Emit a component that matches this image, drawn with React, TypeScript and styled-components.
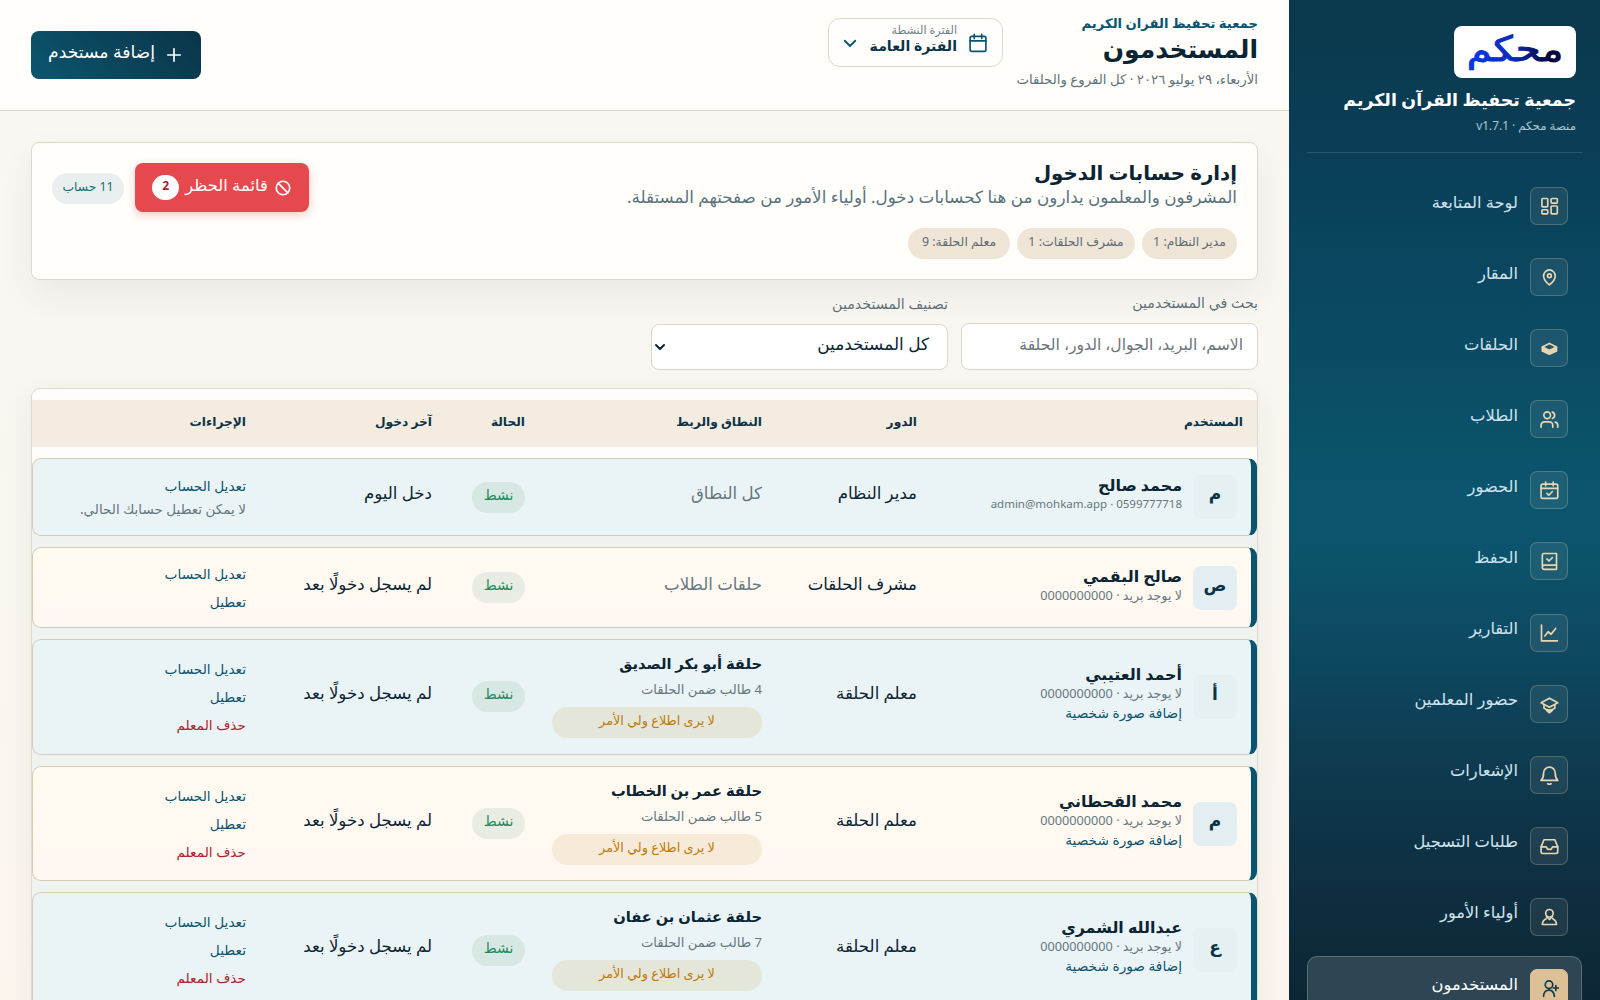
import React from "react";
import styled, { createGlobalStyle } from "styled-components";

const GlobalStyle = createGlobalStyle`
  *, *::before, *::after { box-sizing: border-box; }
  html, body { margin: 0; padding: 0; overflow: hidden; }
  body {
    font-family: "Noto Sans", "DejaVu Sans", sans-serif;
    color: #0b2433;
    background: #fbf8f2;
  }
  button, input { font-family: inherit; }
`;

const Page = styled.div`
  direction: rtl;
  display: flex;
  width: 1600px;
  height: 1000px;
  overflow: hidden;
  white-space: nowrap;
`;

/* ---------- sidebar ---------- */

const Sidebar = styled.aside`
  flex: 0 0 311px;
  height: 1000px;
  overflow: hidden;
  padding: 26px 18px 0;
  background: linear-gradient(180deg, #0a384c 0%, #0a4059 18%, #0b566f 52%, #0d4a62 64%, #0e3447 82%, #0d2635 100%);
`;

const Brand = styled.div`
  display: flex;
  flex-direction: column;
  align-items: flex-start;
  height: 127px;
  padding-right: 6px;
  border-bottom: 1px solid rgba(255, 255, 255, 0.13);
`;

const LogoCard = styled.div`
  display: flex;
  align-items: center;
  justify-content: center;
  width: 122px;
  height: 52px;
  border-radius: 8px;
  background: #fff;
`;

const BrandTitle = styled.div`
  margin-top: 7px;
  font-size: 17.4px;
  font-weight: 700;
  line-height: 28px;
  color: #fff;
`;

const BrandVersion = styled.div`
  margin-top: 2px;
  font-size: 11.8px;
  line-height: 20px;
  color: #a9c6d2;
`;

const Nav = styled.nav`
  display: flex;
  flex-direction: column;
  gap: 7.1px;
  padding-top: 21px;
`;

const NavItem = styled.a<{ $active?: boolean }>`
  display: flex;
  flex: none;
  align-items: center;
  gap: 12px;
  height: 64px;
  padding: 0 13px;
  border: 1px solid ${(p) => (p.$active ? "rgba(160,190,180,0.35)" : "transparent")};
  border-radius: 10px;
  background: ${(p) => (p.$active ? "#2e4653" : "transparent")};
  color: ${(p) => (p.$active ? "#ffffff" : "#cfe3ee")};
`;

const NavIcon = styled.span<{ $active?: boolean }>`
  display: grid;
  place-items: center;
  width: 38px;
  height: 38px;
  border: 1px solid ${(p) => (p.$active ? "#dcc096" : "rgba(200,190,150,0.3)")};
  border-radius: 7px;
  background: ${(p) => (p.$active ? "#dcc096" : "rgba(255,255,255,0.07)")};
  color: ${(p) => (p.$active ? "#0b3a4d" : "#e8d6b0")};
`;

const NavLabel = styled.span`
  padding-bottom: 9px;
  font-size: 16.3px;
  line-height: 24px;
`;

/* ---------- header ---------- */

const Main = styled.main`
  flex: 1;
  min-width: 0;
  background: linear-gradient(180deg, #fbf8f3 0%, #f9f6f0 45%, #fbf5ee 100%);
`;

const Header = styled.header`
  display: flex;
  justify-content: space-between;
  height: 111px;
  padding: 0 31px;
  border-bottom: 1px solid #d8d6c5;
  background: #fffefb;
`;

const HeaderLead = styled.div`
  display: flex;
  gap: 13px;
`;

const Heading = styled.div`
  display: flex;
  flex-direction: column;
  width: 242px;
  padding-top: 13px;
`;

const OrgName = styled.div`
  font-size: 13.2px;
  font-weight: 700;
  line-height: 20px;
  color: #0b5470;
`;

const PageTitle = styled.h1`
  margin: 0;
  font-size: 25px;
  font-weight: 700;
  line-height: 30px;
`;

const PageMeta = styled.div`
  margin-top: 6px;
  font-size: 13.3px;
  line-height: 20px;
  color: #62737a;
`;

const Period = styled.button`
  display: flex;
  align-items: center;
  gap: 11px;
  width: 175px;
  height: 49px;
  margin-top: 18px;
  padding: 0 14px;
  border: 1px solid #dcd9c9;
  border-radius: 12px;
  background: #fffefc;
  color: #0b5470;
`;

const PeriodText = styled.span`
  display: flex;
  flex: 1;
  flex-direction: column;
  align-items: flex-start;
  padding-bottom: 7px;
`;

const PeriodLabel = styled.span`
  font-size: 11.2px;
  line-height: 14px;
  color: #71818a;
`;

const PeriodValue = styled.span`
  font-size: 14.1px;
  font-weight: 700;
  line-height: 18px;
  color: #0b3347;
`;

const AddButton = styled.button`
  display: flex;
  align-items: center;
  justify-content: center;
  gap: 9px;
  width: 170px;
  height: 48px;
  margin-top: 31px;
  border: 0;
  border-radius: 8px;
  background: linear-gradient(225deg, #0a3448 0%, #0b566f 100%);
  color: #fff;
  font-size: 17.2px;
`;

const Raised = styled.span`
  padding-bottom: 6px;
  line-height: 20px;
`;

/* ---------- content ---------- */

const Content = styled.div`
  padding: 31px 31px 0;
`;

const Summary = styled.section`
  display: flex;
  justify-content: space-between;
  height: 138px;
  padding: 20px;
  border: 1px solid #dcd9c9;
  border-radius: 8px;
  background: #fffefb;
  box-shadow: 0 14px 34px rgba(11, 52, 72, 0.07);
`;

const SummaryTitle = styled.h2`
  margin: -3px 0 0;
  font-size: 19.8px;
  font-weight: 700;
  line-height: 26px;
`;

const SummaryText = styled.p`
  margin: 0;
  font-size: 16.8px;
  line-height: 22px;
  color: #5a737c;
`;

const Chips = styled.div`
  display: flex;
  gap: 7px;
  margin-top: 20px;
`;

const Chip = styled.span<{ $w: number }>`
  width: ${(p) => p.$w}px;
  height: 31px;
  border-radius: 16px;
  background: #efe5d7;
  color: #5d6c72;
  font-size: 12.4px;
  line-height: 27px;
  text-align: center;
`;

const SummaryActions = styled.div`
  display: flex;
  gap: 11px;
`;

const BlockButton = styled.button`
  display: flex;
  align-items: center;
  justify-content: center;
  gap: 6px;
  width: 174px;
  height: 49px;
  border: 0;
  border-radius: 8px;
  background: #e5484d;
  color: #fff;
  font-size: 16.4px;
  box-shadow: 0 3px 9px rgba(229, 72, 77, 0.3);
`;

const BlockCount = styled.span`
  width: 27px;
  height: 25px;
  border-radius: 13px;
  background: #fff;
  color: #a51d2a;
  font-size: 12px;
  font-weight: 700;
  line-height: 22px;
`;

const AccountCount = styled.span`
  width: 72px;
  height: 31px;
  margin-top: 10px;
  border-radius: 16px;
  background: #e9eeee;
  color: #187078;
  font-size: 12.3px;
  line-height: 27px;
  text-align: center;
`;

const Filters = styled.div`
  display: flex;
  gap: 13px;
  height: 108px;
  padding-top: 12px;
`;

const Field = styled.label<{ $drop?: number }>`
  display: flex;
  flex-direction: column;
  width: 297px;
  padding-top: ${(p) => p.$drop ?? 0}px;
`;

const FieldLabel = styled.span`
  height: 31px;
  font-size: 14.2px;
  line-height: 22px;
  color: #5d7078;
`;

const Control = styled.span<{ $h: number; $muted?: boolean }>`
  display: flex;
  align-items: center;
  justify-content: space-between;
  height: ${(p) => p.$h}px;
  padding: 0 ${(p) => (p.$muted ? 14 : 18)}px 0 2px;
  border: 1px solid #dcd9c9;
  border-radius: 8px;
  background: #fff;
  color: ${(p) => (p.$muted ? "#6b7478" : "#0b2433")};
  font-size: ${(p) => (p.$muted ? 15.6 : 16.9)}px;
`;

/* ---------- table ---------- */

const columns = "326px 155px 237px 93px 186px 228px";

const Table = styled.section`
  width: 1227px;
  height: 640px;
  padding-top: 11px;
  border: 1px solid #dcd9cf;
  border-radius: 9px;
  background: linear-gradient(180deg, #fffdfa 0, #fffdfa 72px, #eff3f0 144px);
  box-shadow: 0 8px 28px rgba(11, 52, 72, 0.06);
`;

const TableHead = styled.div`
  display: grid;
  grid-template-columns: ${columns};
  height: 47px;
  margin-bottom: 11px;
  background: #f5ece1;
`;

const HeadCell = styled.span`
  padding: 0 14px 0 0;
  font-size: 12.2px;
  font-weight: 700;
  line-height: 43px;
  color: #0b3347;
`;

const Row = styled.div<{ $h: number; $tint: boolean }>`
  display: grid;
  grid-template-columns: 320px 155px 237px 93px 186px 1fr;
  height: ${(p) => p.$h}px;
  margin-bottom: 11px;
  border: 1px solid #d8cbb4;
  border-right: 6px solid #0b5470;
  border-radius: 9px;
  background: ${(p) => (p.$tint ? "#eaf3f5" : "linear-gradient(180deg, #fffbf0, #fff7f2)")};
`;

const Cell = styled.div<{ $lift?: number }>`
  display: flex;
  flex-direction: column;
  align-items: flex-start;
  justify-content: center;
  min-width: 0;
  padding: 0 14px ${(p) => p.$lift ?? 0}px 0;
`;

const UserCell = styled.div`
  display: flex;
  align-items: center;
  gap: 11px;
  padding-right: 14px;
`;

const Avatar = styled.span<{ $tint: boolean }>`
  flex: none;
  width: 44px;
  height: 44px;
  border-radius: 8px;
  background: ${(p) => (p.$tint ? "#e5f0f2" : "#e2eef2")};
  font-size: 17px;
  font-weight: 700;
  line-height: 38px;
  text-align: center;
  color: #0b3347;
`;

const UserText = styled.div`
  display: flex;
  flex-direction: column;
  align-items: flex-start;
  padding-bottom: 6px;
`;

const UserName = styled.strong`
  font-size: 15.9px;
  line-height: 20px;
`;

const UserContact = styled.span`
  font-size: ${(p) => (p.dir === "ltr" ? 11.5 : 12.7)}px;
  line-height: 18px;
  color: #667880;
`;

const Link = styled.a<{ $danger?: boolean; $lh?: number }>`
  font-size: 13.7px;
  line-height: ${(p) => p.$lh ?? 28}px;
  color: ${(p) => (p.$danger ? "#b3202f" : "#0b5470")};
`;

const Plain = styled.span<{ $muted?: boolean }>`
  font-size: 16.6px;
  line-height: 24px;
  color: ${(p) => (p.$muted ? "#66777e" : "#0b2433")};
`;

const ScopeName = styled.strong`
  font-size: 14.7px;
  line-height: 24px;
`;

const ScopeCount = styled.span`
  font-size: 13.1px;
  line-height: 29px;
  color: #667880;
`;

const Notice = styled.span<{ $tint: boolean }>`
  width: 210px;
  height: 31px;
  margin-top: 3px;
  border-radius: 16px;
  background: ${(p) => (p.$tint ? "#e5e6da" : "#f8ead8")};
  color: #bd7a0c;
  font-size: 12.8px;
  line-height: 26px;
  text-align: center;
`;

const Status = styled.span<{ $tint: boolean }>`
  width: 53px;
  height: 31px;
  border-radius: 16px;
  background: ${(p) => (p.$tint ? "#d7e8e4" : "#e8ece2")};
  color: #1f8a5b;
  font-size: 14px;
  line-height: 26px;
  text-align: center;
`;

const Note = styled.span`
  font-size: 13.5px;
  line-height: 22px;
  color: #667880;
`;

/* ---------- icons ---------- */

const Icon = ({ size = 20, sw = 2, children }: { size?: number; sw?: number; children: React.ReactNode }) => (
  <svg width={size} height={size} viewBox="0 0 24 24" fill="none" stroke="currentColor" strokeWidth={sw} strokeLinecap="round" strokeLinejoin="round" style={{ flex: "none" }}>
    {children}
  </svg>
);

const icons = {
  dashboard: <><rect x="3.5" y="3" width="7" height="10" rx="1" /><rect x="14.5" y="3" width="7.500" height="5.500" rx="1" /><rect x="14.5" y="12" width="7.500" height="9.500" rx="1" /><rect x="3.5" y="16.5" width="7" height="5" rx="1" /></>,
  pin: <><path d="M12.500 21.500c4.500-3.800 7-7 7-10.500a7 7.500 0 0 0-14 0c0 3.500 2.500 6.700 7 10.500z" /><circle cx="12.500" cy="10.500" r="2.300" /></>,
  layers: <><path d="M4 11l8.500 4.500L21 11v4.500l-8.500 4L4 15.500z" fill="currentColor" /><path d="M12.500 6.500L21 10.800l-8.500 4.200L4 10.800z" /></>,
  users: <><circle cx="9.800" cy="7.500" r="4" /><path d="M2.500 22v-2.500a4 4 0 0 1 4-4h6a4 4 0 0 1 4 4V22M16 3.700a4 4 0 0 1 0 7.600M22.500 22v-2.500a4 4 0 0 0-3-3.800" /></>,
  calendarCheck: <><rect x="2.500" y="5" width="20" height="17" rx="2" /><path d="M8 2.500v4.500M17 2.500v4.500M2.500 10h20M9.500 16l2.300 2.300 4.200-4.500" /></>,
  book: <><path d="M4 19.500V5a2 2 0 0 1 2-2h15v19H6.500a2.500 2.500 0 0 1 0-5H21M9.500 9.500l2.500 2.500 4-4" /></>,
  chart: <><path d="M3 2.500V21.500h19M7 15.500l4-5 3.500 3L20 6.500" /></>,
  cap: <><path d="M12.500 5l10 5.500-10 5.500-10-5.500z" /><path d="M6 13v4c3 3 10 3 13 0v-4M9 19.500l3.500 3 3.500-3" /></>,
  bell: <><path d="M2.500 18.500h20c-2-2-3-4-3-9a7 7 0 0 0-14 0c0 5-1 7-3 9zM10.500 22.500c1.200.800 2.800.800 4 0" /></>,
  inbox: <><path d="M22.500 13h-6l-2 3h-4l-2-3h-6" /><path d="M6 4.500h13l3.500 8.500v6a2 2 0 0 1-2 2h-16a2 2 0 0 1-2-2v-6z" /></>,
  guardian: <><circle cx="12.500" cy="7.500" r="4.500" /><path d="M9 11.500l3.500 3.500 3.500-3.500M8.500 14c-3 1.500-4.500 4-4.500 7h17c0-3-1.500-5.500-4.500-7" /></>,
  userPlus: <><circle cx="12" cy="8" r="4.500" /><path d="M5.500 22c0-5 3-7.500 6.500-7.500s6 2.500 6.500 7.500M17 12h6.500M20.200 9v6" /></>,
};

const nav: [string, React.ReactNode][] = [
  ["لوحة المتابعة", icons.dashboard],
  ["المقار", icons.pin],
  ["الحلقات", icons.layers],
  ["الطلاب", icons.users],
  ["الحضور", icons.calendarCheck],
  ["الحفظ", icons.book],
  ["التقارير", icons.chart],
  ["حضور المعلمين", icons.cap],
  ["الإشعارات", icons.bell],
  ["طلبات التسجيل", icons.inbox],
  ["أولياء الأمور", icons.guardian],
  ["المستخدمون", icons.userPlus],
];

const LogoMark = styled.svg`
  direction: rtl;
  font-family: "DejaVu Sans", sans-serif;
  font-size: 35px;
`;

const Logo = () => (
  <LogoMark width="108" height="46" viewBox="0 0 108 46">
    <defs>
      <linearGradient id="logoInk" x1="0" y1="0" x2="1" y2="0">
        <stop offset="0.08" stopColor="#0538e0" />
        <stop offset="0.45" stopColor="#0a2bc0" />
        <stop offset="0.85" stopColor="#06083c" />
      </linearGradient>
    </defs>
    <text transform="translate(54 32) scale(1.15 1)" textAnchor="middle" fill="url(#logoInk)" stroke="url(#logoInk)" strokeWidth="1">محكم</text>
  </LogoMark>
);

type User = {
  letter: string;
  name: string;
  contact: string;
  role: string;
  scope: string;
  students?: string;
  last: string;
  h: number;
  self?: boolean;
};

const never = "لم يسجل دخولًا بعد";
const noMail = "لا يوجد بريد · 0000000000";

const users: User[] = [
  { letter: "م", name: "محمد صالح", contact: "admin@mohkam.app · 0599777718", role: "مدير النظام", scope: "كل النطاق", last: "دخل اليوم", h: 78, self: true },
  { letter: "ص", name: "صالح البقمي", contact: noMail, role: "مشرف الحلقات", scope: "حلقات الطلاب", last: never, h: 81 },
  { letter: "أ", name: "أحمد العتيبي", contact: noMail, role: "معلم الحلقة", scope: "حلقة أبو بكر الصديق", students: "4 طالب ضمن الحلقات", last: never, h: 115.7 },
  { letter: "م", name: "محمد القحطاني", contact: noMail, role: "معلم الحلقة", scope: "حلقة عمر بن الخطاب", students: "5 طالب ضمن الحلقات", last: never, h: 115.7 },
  { letter: "ع", name: "عبدالله الشمري", contact: noMail, role: "معلم الحلقة", scope: "حلقة عثمان بن عفان", students: "7 طالب ضمن الحلقات", last: never, h: 115.7 },
];

const heads = ["المستخدم", "الدور", "النطاق والربط", "الحالة", "آخر دخول", "الإجراءات"];

function UserRow({ user, tint }: { user: User; tint: boolean }) {
  return (
    <Row $h={user.h} $tint={tint}>
      <UserCell>
        <Avatar $tint={tint}>{user.letter}</Avatar>
        <UserText>
          <UserName>{user.name}</UserName>
          <UserContact dir={user.self ? "ltr" : "rtl"}>{user.contact}</UserContact>
          {user.students && <Link $lh={22}>إضافة صورة شخصية</Link>}
        </UserText>
      </UserCell>
      <Cell $lift={8}><Plain>{user.role}</Plain></Cell>
      {user.students ? (
        <Cell $lift={5}>
          <ScopeName>{user.scope}</ScopeName>
          <ScopeCount>{user.students}</ScopeCount>
          <Notice $tint={tint}>لا يرى اطلاع ولي الأمر</Notice>
        </Cell>
      ) : (
        <Cell $lift={8}><Plain $muted>{user.scope}</Plain></Cell>
      )}
      <Cell><Status $tint={tint}>نشط</Status></Cell>
      <Cell $lift={8}><Plain>{user.last}</Plain></Cell>
      <Cell>
        <Link $lh={user.self ? 24 : 28}>تعديل الحساب</Link>
        {user.self ? <Note>لا يمكن تعطيل حسابك الحالي.</Note> : <Link>تعطيل</Link>}
        {user.students && <Link $danger>حذف المعلم</Link>}
      </Cell>
    </Row>
  );
}

export default function App() {
  return (
    <Page dir="rtl" lang="ar">
      <GlobalStyle />
      <Sidebar>
        <Brand>
          <LogoCard><Logo /></LogoCard>
          <BrandTitle>جمعية تحفيظ القرآن الكريم</BrandTitle>
          <BrandVersion>منصة محكم · v1.7.1</BrandVersion>
        </Brand>
        <Nav>
          {nav.map(([label, icon], i) => (
            <NavItem key={label} $active={i === nav.length - 1}>
              <NavIcon $active={i === nav.length - 1}><Icon>{icon}</Icon></NavIcon>
              <NavLabel>{label}</NavLabel>
            </NavItem>
          ))}
        </Nav>
      </Sidebar>
      <Main>
        <Header>
          <HeaderLead>
            <Heading>
              <OrgName>جمعية تحفيظ القران الكريم</OrgName>
              <PageTitle>المستخدمون</PageTitle>
              <PageMeta>الأربعاء، ٢٩ يوليو ٢٠٢٦ · كل الفروع والحلقات</PageMeta>
            </Heading>
            <Period>
              <Icon><rect x="2.5" y="4" width="19" height="18" rx="2" /><path d="M7.500 1.500v5M16.500 1.500v5M2.500 9.500h19" /></Icon>
              <PeriodText>
                <PeriodLabel>الفترة النشطة</PeriodLabel>
                <PeriodValue>الفترة العامة</PeriodValue>
              </PeriodText>
              <Icon size={18} sw={2.4}><path d="M5 9l7 7 7-7" /></Icon>
            </Period>
          </HeaderLead>
          <AddButton>
            <Icon size={20}><path d="M12 4.500v15M4.500 12h15" /></Icon>
            <Raised>إضافة مستخدم</Raised>
          </AddButton>
        </Header>
        <Content>
          <Summary>
            <div>
              <SummaryTitle>إدارة حسابات الدخول</SummaryTitle>
              <SummaryText>المشرفون والمعلمون يدارون من هنا كحسابات دخول. أولياء الأمور من صفحتهم المستقلة.</SummaryText>
              <Chips>
                <Chip $w={95}>مدير النظام: 1</Chip>
                <Chip $w={118}>مشرف الحلقات: 1</Chip>
                <Chip $w={102}>معلم الحلقة: 9</Chip>
              </Chips>
            </div>
            <SummaryActions>
              <BlockButton>
                <Icon size={18} sw={2.2}><circle cx="12" cy="12" r="9" /><path d="M5.600 5.600l12.800 12.800" /></Icon>
                <Raised>قائمة الحظر</Raised>
                <BlockCount>2</BlockCount>
              </BlockButton>
              <AccountCount>11 حساب</AccountCount>
            </SummaryActions>
          </Summary>
          <Filters>
            <Field>
              <FieldLabel>بحث في المستخدمين</FieldLabel>
              <Control $h={47} $muted><Raised>الاسم، البريد، الجوال، الدور، الحلقة</Raised></Control>
            </Field>
            <Field $drop={1}>
              <FieldLabel>تصنيف المستخدمين</FieldLabel>
              <Control $h={46}>
                <Raised>كل المستخدمين</Raised>
                <Icon size={12} sw={4}><path d="M4 8l8 8 8-8" /></Icon>
              </Control>
            </Field>
          </Filters>
          <Table>
            <TableHead>{heads.map((h) => <HeadCell key={h}>{h}</HeadCell>)}</TableHead>
            {users.map((u, i) => <UserRow key={i} user={u} tint={i % 2 === 0} />)}
          </Table>
        </Content>
      </Main>
    </Page>
  );
}
